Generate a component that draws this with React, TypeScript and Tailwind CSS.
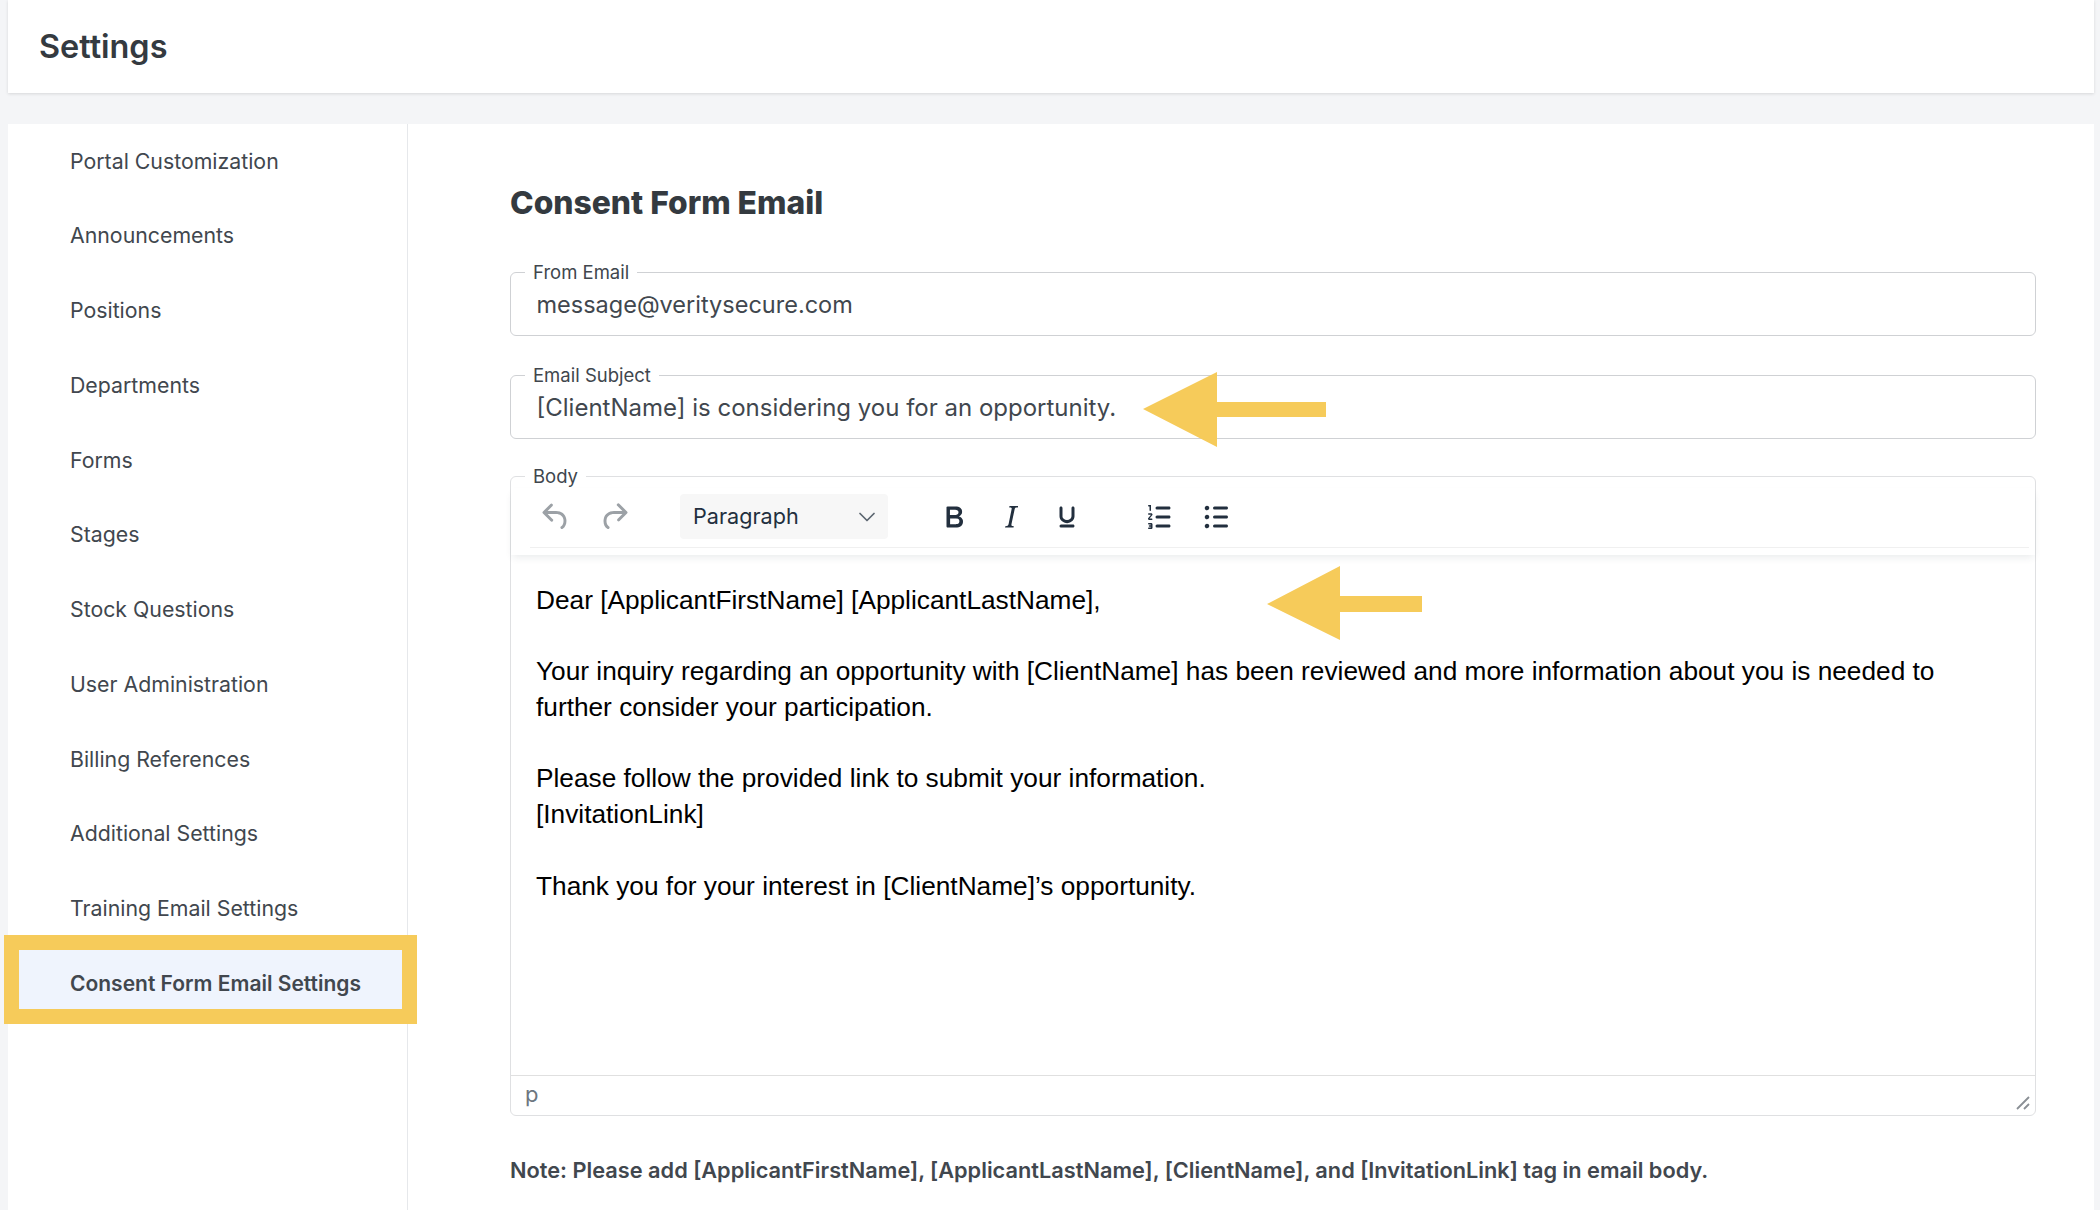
import { ChevronDown } from "lucide-react";

const navItems = [
  "Portal Customization",
  "Announcements",
  "Positions",
  "Departments",
  "Forms",
  "Stages",
  "Stock Questions",
  "User Administration",
  "Billing References",
  "Additional Settings",
  "Training Email Settings",
  "Consent Form Email Settings",
];

function Icon({ d, className }: { d: string; className: string }) {
  return (
    <svg viewBox="0 0 24 24" className={className} fill="currentColor">
      <path fillRule="evenodd" d={d} />
    </svg>
  );
}

const icons = {
  undo: "M6.4 8H12c3.7 0 6.2 2 6.8 5.1.6 2.7-.4 5.6-2.3 6.8a1 1 0 0 1-1-1.8c1.1-.7 1.8-2.7 1.4-4.6-.5-2.1-2.1-3.5-4.9-3.5H6.4l3.3 3.3a1 1 0 1 1-1.4 1.4l-5-5a1 1 0 0 1 0-1.4l5-5a1 1 0 0 1 1.4 1.4L6.4 8Z",
  redo: "M17.6 10H12c-2.8 0-4.4 1.4-4.9 3.5-.4 2 .3 3.9 1.4 4.6a1 1 0 1 1-1 1.8c-2-1.2-2.9-4.1-2.3-6.8.6-3 3.2-5.1 6.8-5.1h5.6l-3.3-3.3a1 1 0 1 1 1.4-1.4l5 5a1 1 0 0 1 0 1.4l-5 5a1 1 0 0 1-1.4-1.4l3.3-3.3Z",
  bold: "M7.8 19c-.3 0-.5 0-.6-.2l-.2-.5V5.7c0-.2 0-.4.2-.5l.6-.2h5c1.5 0 2.7.3 3.5 1 .7.6 1.1 1.4 1.1 2.5a3 3 0 0 1-.6 1.9c-.4.6-1 1-1.6 1.2.4.1.9.3 1.3.6s.8.7 1 1.2c.4.4.5 1 .5 1.6 0 1.3-.4 2.3-1.3 3-.8.7-2.1 1-3.8 1H7.8Zm5-8.3c.6 0 1.2-.1 1.6-.5.4-.3.6-.7.6-1.3 0-1.1-.8-1.7-2.3-1.7H9.3v3.5h3.4Zm.5 6c.7 0 1.3-.1 1.7-.4.4-.4.6-.9.6-1.5s-.2-1-.7-1.4c-.4-.3-1-.4-2-.4H9.4v3.8h4Z",
  italic: "M16.7 4.7l-.1.9h-.3c-.6 0-1 0-1.4.3-.3.3-.4.6-.5 1.1l-2.1 9.8v.6c0 .5.4.8 1.4.8h.2l-.2.8H8l.2-.8h.2c1.1 0 1.8-.5 2-1.5l2-9.8.1-.5c0-.6-.4-.8-1.4-.8h-.3l.2-.9h5.8Z",
  underline: "M16 5c.6 0 1 .4 1 1v5.5a4 4 0 0 1-.4 1.8l-1 1.4a5.3 5.3 0 0 1-5.5 1 5 5 0 0 1-1.6-1c-.5-.4-.8-.9-1.1-1.4a4 4 0 0 1-.4-1.8V6c0-.6.4-1 1-1s1 .4 1 1v5.5c0 .3 0 .6.2 1l.6.7a3.3 3.3 0 0 0 2.2.8 3.4 3.4 0 0 0 2.2-.8c.3-.2.4-.5.6-.8l.2-.9V6c0-.6.4-1 1-1ZM8 17h8c.6 0 1 .4 1 1s-.4 1-1 1H8a1 1 0 0 1 0-2Z",
  ol: "M10 17h8c.6 0 1 .4 1 1s-.4 1-1 1h-8a1 1 0 0 1 0-2Zm0-6h8c.6 0 1 .4 1 1s-.4 1-1 1h-8a1 1 0 0 1 0-2Zm0-6h8c.6 0 1 .4 1 1s-.4 1-1 1h-8a1 1 0 1 1 0-2ZM6 4v3.5c0 .3-.2.5-.5.5a.5.5 0 0 1-.5-.5V5h-.5a.5.5 0 0 1 0-1H6Zm-1 8.8l.2.2h1.3c.3 0 .5.2.5.5s-.2.5-.5.5H4.9a.9.9 0 0 1-.9-.9c0-.2 0-.4.2-.5l1.8-2.1h-1.5a.5.5 0 0 1 0-1h1.6c.5 0 .9.4.9.9 0 .2 0 .4-.2.5l-1.8 2.1ZM4.5 16h1.6c.5 0 .9.4.9.9v2.2c0 .5-.4.9-.9.9H4.5a.5.5 0 0 1 0-1h1.3v-.5h-.8a.5.5 0 0 1 0-1h.8V17H4.5a.5.5 0 0 1 0-1Z",
  ul: "M11 5h8c.6 0 1 .4 1 1s-.4 1-1 1h-8a1 1 0 0 1 0-2Zm0 6h8c.6 0 1 .4 1 1s-.4 1-1 1h-8a1 1 0 0 1 0-2Zm0 6h8c.6 0 1 .4 1 1s-.4 1-1 1h-8a1 1 0 0 1 0-2ZM4.5 6c0-.4.1-.8.4-1 .3-.4.7-.5 1.1-.5s.8.1 1 .4c.4.3.5.7.5 1.1s-.1.8-.4 1c-.3.4-.7.5-1.1.5s-.8-.1-1-.4c-.4-.3-.5-.7-.5-1.1Zm0 6c0-.4.1-.8.4-1 .3-.4.7-.5 1.1-.5s.8.1 1 .4c.4.3.5.7.5 1.1s-.1.8-.4 1c-.3.4-.7.5-1.1.5s-.8-.1-1-.4c-.4-.3-.5-.7-.5-1.1Zm0 6c0-.4.1-.8.4-1 .3-.4.7-.5 1.1-.5s.8.1 1 .4c.4.3.5.7.5 1.1s-.1.8-.4 1c-.3.4-.7.5-1.1.5s-.8-.1-1-.4c-.4-.3-.5-.7-.5-1.1Z",
};

function TextField({ label, value, className, textClass }: { label: string; value: string; className: string; textClass: string }) {
  return (
    <fieldset className={`rounded-[6px] border border-[#cfd1d4] px-[15px] pb-[8px] ${className}`}>
      <legend className="ml-[-1px] px-[8px] text-[18.5px] leading-[24px] text-[#40464d]">{label}</legend>
      <div className={`flex h-[43px] items-center pb-[2px] pl-[10.5px] text-[#41474e] ${textClass}`}>{value}</div>
    </fieldset>
  );
}

export default function App() {
  return (
    <div className="relative h-[1210px] overflow-hidden bg-[#f4f5f7] pr-[6px] pl-[8px] font-['Inter',sans-serif]">
      <header className="flex h-[93px] items-center bg-white pt-[1px] pl-[31px] shadow-[0_1px_3px_rgba(0,0,0,0.12)]">
        <h1 className="text-[32.4px] font-semibold text-[#343a40]">Settings</h1>
      </header>

      <div className="mt-[31px] flex h-[1086px] bg-white">
        <aside className="flex w-[400px] shrink-0 flex-col gap-[6.75px] border-r border-[#e6e8eb] pt-[3.5px] pr-[5px] pl-[11px]">
          {navItems.map((item) => (
            <div
              key={item}
              className={`flex h-[68px] shrink-0 items-center pl-[51px] text-[#41474e] ${
                item === "Consent Form Email Settings" ? "bg-[#eff4fd] text-[21px] font-semibold" : "text-[21.3px]"
              }`}
            >
              {item}
            </div>
          ))}
        </aside>

        <main className="min-w-0 flex-1 pr-[58px] pl-[102px]">
          <h2 className="mt-[55px] text-[31.8px] leading-[48px] font-extrabold text-[#343a40]">Consent Form Email</h2>

          <TextField label="From Email" value="message@veritysecure.com" className="mt-[33px]" textClass="text-[23.5px]" />
          <TextField label="Email Subject" value="[ClientName] is considering you for an opportunity." className="mt-[27px]" textClass="text-[24px]" />

          <fieldset className="mt-[25px] rounded-[6px] border border-[#dfe0e2]">
            <legend className="ml-[14px] px-[8px] text-[18.5px] leading-[24px] text-[#40464d]">Body</legend>
            <div className="relative z-10 flex h-[67px] items-start bg-white pt-[6px] pl-[27px] shadow-[0_4px_8px_-2px_rgba(34,47,62,0.1)]">
              <div className="flex h-[45px] w-[142px] items-center gap-[22px] text-[#9ca1a6]">
                <Icon d={icons.undo} className="h-[36px] w-[36px]" />
                <Icon d={icons.redo} className="h-[36px] w-[36px]" />
              </div>
              <div className="flex h-[45px] w-[208px] items-center justify-between rounded-[4px] bg-[#f7f7f7] pr-[7px] pl-[13px] text-[21.6px] text-[#222f3e]">
                Paragraph
                <ChevronDown className="h-[28px] w-[28px] text-[#5c6670]" strokeWidth={1.5} />
              </div>
              <div className="ml-[48px] flex h-[45px] items-center gap-[20.5px] text-[#222f3e]">
                <Icon d={icons.bold} className="h-[36px] w-[36px]" />
                <Icon d={icons.italic} className="h-[36px] w-[36px]" />
                <Icon d={icons.underline} className="h-[36px] w-[36px]" />
                <Icon d={icons.ol} className="ml-[36px] h-[36px] w-[36px]" />
                <Icon d={icons.ul} className="h-[36px] w-[36px]" />
              </div>
              <div className="absolute right-[6px] bottom-[7px] left-[19px] h-px bg-[#f0f0f0]" />
            </div>

            <div className="h-[520px] pt-[28px] pl-[25px] font-['Liberation_Sans',sans-serif] text-[26.25px] leading-[35.7px] text-black">
              <p>Dear [ApplicantFirstName] [ApplicantLastName],</p>
              <p className="mt-[35.7px]">
                Your inquiry regarding an opportunity with [ClientName] has been reviewed and more information about you is needed to
                <br />
                further consider your participation.
              </p>
              <p className="mt-[35.7px]">
                Please follow the provided link to submit your information.
                <br />
                [InvitationLink]
              </p>
              <p className="mt-[35.7px]">Thank you for your interest in [ClientName]’s opportunity.</p>
            </div>

            <div className="relative flex h-[40px] items-center border-t border-[#e0e0e0] pb-[2px] pl-[14px] text-[22px] text-[#6d7680]">
              p
              <svg viewBox="0 0 14 14" className="absolute right-[5px] bottom-[5px] h-[14px] w-[14px] text-[#8a8f95]" fill="none" stroke="currentColor" strokeWidth="1.8">
                <path d="M1 13 13 1M8 13l5-5" />
              </svg>
            </div>
          </fieldset>

          <p className="mt-[39px] text-[21.75px] leading-[30px] font-semibold text-[#41474e]">
            Note: Please add [ApplicantFirstName], [ApplicantLastName], [ClientName], and [InvitationLink] tag in email body.
          </p>
        </main>
      </div>

      {/* yellow annotations drawn over the screenshot */}
      <div className="absolute top-[935px] left-[4px] h-[89px] w-[413px] border-[15px] border-[#f6cb5a]" />
      <svg viewBox="0 0 183 75" className="absolute top-[372px] left-[1143px] h-[75px] w-[183px]" fill="#f6cb5a">
        <path d="M0 37 74 0V30H183V45H74V75Z" />
      </svg>
      <svg viewBox="0 0 155 74" className="absolute top-[566px] left-[1267px] h-[74px] w-[155px]" fill="#f6cb5a">
        <path d="M0 38 73 0V30H155V46H73V74Z" />
      </svg>
    </div>
  );
}
